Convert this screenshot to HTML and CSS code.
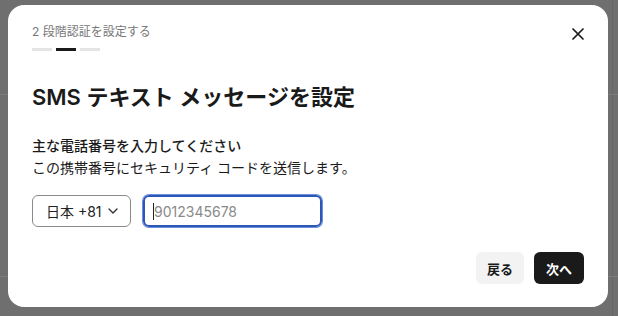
FILE: index.html
```html
<!DOCTYPE html>
<html lang="ja">
<head>
<meta charset="utf-8">
<link rel="stylesheet" href="styles.css">
</head>
<body>
<div class="backdrop">
  <div class="modal">
    <div class="header">
      <div class="step">
        <div class="step-label">2 段階認証を設定する</div>
        <div class="progress">
          <span class="seg"></span><span class="seg active"></span><span class="seg"></span>
        </div>
      </div>
      <button class="close" aria-label="閉じる">
        <svg width="14" height="14" viewBox="0 0 14 14"><path d="M2 2 L12 12 M12 2 L2 12" stroke="#1a1a1a" stroke-width="1.7" stroke-linecap="round"/></svg>
      </button>
    </div>
    <h1 class="title">SMS テキスト メッセージを設定</h1>
    <div class="desc">
      <p class="desc-strong">主な電話番号を入力してください</p>
      <p class="desc-sub">この携帯番号にセキュリティ コードを送信します。</p>
    </div>
    <div class="controls">
      <div class="select">
        <span>日本 +81</span>
        <svg width="10" height="6" viewBox="0 0 10 6"><path d="M1 1 L5 5 L9 1" fill="none" stroke="#333" stroke-width="1.4" stroke-linecap="round" stroke-linejoin="round"/></svg>
      </div>
      <div class="phone"><span class="caret"></span><span class="placeholder">9012345678</span></div>
    </div>
    <div class="actions">
      <button class="btn back">戻る</button>
      <button class="btn next">次へ</button>
    </div>
  </div>
</div>
</body>
</html>
```
FILE: styles.css
```css
* { box-sizing: border-box; }
html, body { margin: 0; padding: 0; }
body {
  width: 618px;
  height: 316px;
  overflow: hidden;
  font-family: "Inter", "Noto Sans CJK JP", sans-serif;
  background: #6f6f6f;
}
.backdrop {
  width: 618px;
  height: 316px;
  padding: 5px 0 0 8px;
  background:
    linear-gradient(#7b7b7b, #7b7b7b) 0 94px / 100% 1px no-repeat,
    linear-gradient(#7b7b7b, #7b7b7b) 0 276px / 100% 1px no-repeat,
    linear-gradient(#676767, #676767) 612px 0 / 1px 100% no-repeat,
    #6f6f6f;
}
.modal {
  width: 600px;
  height: 302px;
  background: #fff;
  border-radius: 16px;
  padding: 19px 24px 23px 24px;
  display: flex;
  flex-direction: column;
}
.header {
  display: flex;
  justify-content: space-between;
  align-items: flex-start;
}
.step-label {
  font-size: 12px;
  line-height: 16px;
  color: #777;
}
.progress {
  display: flex;
  gap: 4px;
  margin-top: 8px;
}
.seg {
  width: 20px;
  height: 3px;
  background: #e4e4e4;
}
.seg.active { background: #1a1a1a; }
.close {
  border: 0;
  background: none;
  padding: 0;
  margin: 3px -1px 0 0;
  width: 14px;
  height: 14px;
  display: flex;
}
.title {
  margin: 32px 0 0 0;
  font-size: 22px;
  line-height: 29px;
  font-weight: 600;
  color: #1a1a1a;
}
.desc { margin-top: 23px; }
.desc p {
  margin: 0;
  font-size: 14px;
  line-height: 22px;
  color: #1a1a1a;
}
.desc-strong { font-weight: 500; }
.controls {
  display: flex;
  gap: 12px;
  margin-top: 16px;
}
.select {
  width: 99px;
  height: 32px;
  border: 1px solid #8a8a8a;
  border-radius: 6px;
  display: flex;
  align-items: center;
  padding: 0 12px 0 13px;
  justify-content: space-between;
  font-size: 14px;
  color: #222;
}
.phone {
  width: 179px;
  height: 32px;
  border: 2px solid #2c57b8;
  box-shadow: 0 0 0 1px #6b8fd8;
  border-radius: 6px;
  display: flex;
  align-items: center;
  padding-left: 8px;
  font-size: 14px;
}
.caret {
  width: 1px;
  height: 17px;
  background: #222;
}
.placeholder { color: #8a8a8a; }
.actions {
  margin-top: auto;
  display: flex;
  justify-content: flex-end;
  gap: 10px;
}
.btn {
  height: 32px;
  border: 0;
  border-radius: 6px;
  font-family: "Inter", "Noto Sans CJK JP", sans-serif;
  font-size: 13px;
  font-weight: 600;
  padding: 0 11px;
}
.back { background: #f3f3f3; color: #1a1a1a; width: 48px; }
.next { background: #1a1a1a; color: #fff; width: 50px; }
```
